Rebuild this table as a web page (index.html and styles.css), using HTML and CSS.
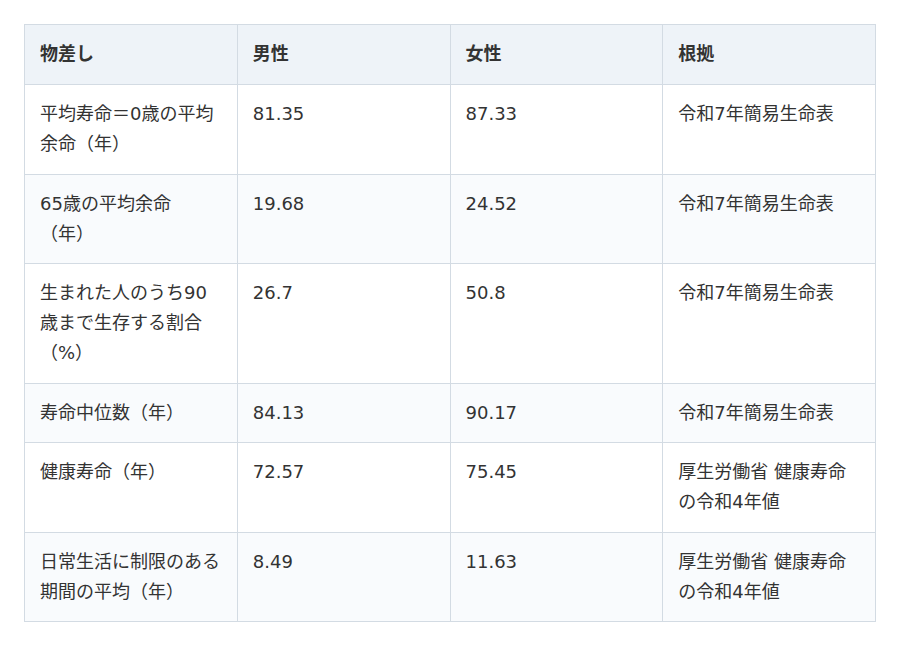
FILE: index.html
```html
<!DOCTYPE html>
<html lang="ja">
<head>
<meta charset="utf-8">
<link rel="stylesheet" href="styles.css">
</head>
<body>
<div class="wrap">
<table class="tbl">
<thead>
<tr><th>物差し</th><th>男性</th><th>女性</th><th>根拠</th></tr>
</thead>
<tbody>
<tr><td>平均寿命＝0歳の平均余命（年）</td><td>81.35</td><td>87.33</td><td>令和7年簡易生命表</td></tr>
<tr><td>65歳の平均余命（年）</td><td>19.68</td><td>24.52</td><td>令和7年簡易生命表</td></tr>
<tr><td>生まれた人のうち90歳まで生存する割合（%）</td><td>26.7</td><td>50.8</td><td>令和7年簡易生命表</td></tr>
<tr><td>寿命中位数（年）</td><td>84.13</td><td>90.17</td><td>令和7年簡易生命表</td></tr>
<tr><td>健康寿命（年）</td><td>72.57</td><td>75.45</td><td>厚生労働省 健康寿命の令和4年値</td></tr>
<tr><td>日常生活に制限のある期間の平均（年）</td><td>8.49</td><td>11.63</td><td>厚生労働省 健康寿命の令和4年値</td></tr>
</tbody>
</table>
</div>
</body>
</html>
```
FILE: styles.css
```css
html, body { margin: 0; padding: 0; background: #ffffff; }
body {
  font-family: "DejaVu Sans", "Noto Sans CJK JP", sans-serif;
  color: #333333;
  font-size: 18px;
  text-spacing-trim: space-all;
}
.wrap { padding: 24px; }
.tbl {
  width: 852px;
  border-collapse: collapse;
  table-layout: fixed;
}
.tbl th, .tbl td {
  border: 1px solid #d3dbe3;
  line-height: 30px;
  text-align: left;
  vertical-align: top;
  text-spacing-trim: space-all;
}
.tbl th {
  padding: 14px 15px 15px;
  background: #eef3f8;
  font-weight: 700;
}
.tbl td {
  padding: 14px 15px 14.5px;
}
.tbl tbody tr:nth-child(even) td { background: #f9fbfd; }
```
